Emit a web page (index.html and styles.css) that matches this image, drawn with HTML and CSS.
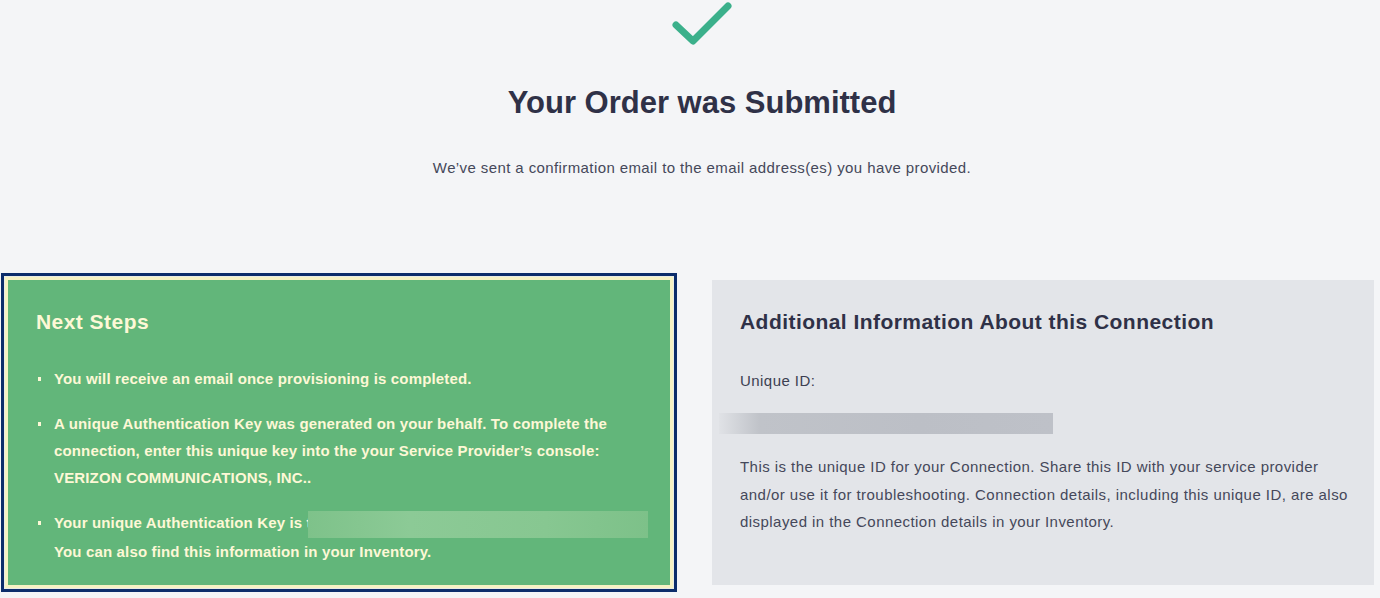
FILE: index.html
```html
<!DOCTYPE html>
<html lang="en">
<head>
<meta charset="UTF-8">
<meta name="viewport" content="width=device-width, initial-scale=1.0">
<title>Your Order was Submitted</title>
<link rel="stylesheet" href="styles.css">
</head>
<body>

<!-- order confirmation header -->
<div class="confirm-header">
  <svg class="check-icon" width="60" height="50" viewBox="0 0 60 50">
    <polyline points="4,25 21,41 56,6" fill="none" stroke="#3bb08b" stroke-width="7" stroke-linecap="round" stroke-linejoin="round"/>
  </svg>
  <h1>Your Order was Submitted</h1>
  <p class="subtitle">We’ve sent a confirmation email to the email address(es) you have provided.</p>
</div>

<div class="cards-row">
  <div class="highlight">
    <div class="card next-steps">
      <h2>Next Steps</h2>
      <ul>
        <li>You will receive an email once provisioning is completed.</li>
        <li>A unique Authentication Key was generated on your behalf. To complete the connection, enter this unique key into the your Service Provider’s console: VERIZON COMMUNICATIONS, INC..</li>
        <li><span class="key-line">Your unique Authentication Key is t<span class="key-hidden"></span></span><br>You can also find this information in your Inventory.</li>
      </ul>
    </div>
  </div>

  <div class="card info">
    <h2>Additional Information About this Connection</h2>
    <p class="label">Unique ID:</p>
    <div class="id-hidden"></div>
    <p class="desc">This is the unique ID for your Connection. Share this ID with your service provider and/or use it for troubleshooting. Connection details, including this unique ID, are also displayed in the Connection details in your Inventory.</p>
  </div>
</div>

</body>
</html>
```

FILE: styles.css
```css
body {
    font-family: "Liberation Sans", Arial, sans-serif;
    background-color: #f4f5f7;
    margin: 0;
    padding: 0;
    color: #2f3147;
}

.confirm-header {
    text-align: center;
    padding-left: 24px;
}

.check-icon {
    display: block;
    margin: 0 auto;
}

h1 {
    font-size: 31px;
    font-weight: 700;
    line-height: 34px;
    margin: 36px 0 0;
    color: #2f3147;
}

.subtitle {
    font-size: 15px;
    line-height: 20px;
    letter-spacing: 0.4px;
    margin: 38px 0 0;
    color: #45485a;
}

/* cards */
.cards-row {
    display: flex;
    align-items: flex-start;
    gap: 35px;
    margin-top: 95px;
    padding: 0 6px 0 1px;
}

.highlight {
    border: 3px solid #0c2d6b;
    padding: 1px;
    background-color: #e9ece4;
    width: 668px;
    flex: none;
}

.card {
    box-sizing: border-box;
    height: 311px;
    padding: 30px 28px 0;
}

.card h2 {
    font-size: 21px;
    font-weight: 700;
    line-height: 24px;
    letter-spacing: 0.45px;
    margin: 0;
}

.next-steps {
    background-color: #62b67a;
    border: 3px solid #f6f2c4;
    color: #fdf8d6;
}

.next-steps ul {
    margin: 31px 0 0;
    padding-left: 18px;
    list-style: none;
}

.next-steps li {
    position: relative;
    font-size: 15px;
    font-weight: 700;
    line-height: 27px;
    letter-spacing: 0.15px;
    margin-bottom: 18px;
}

.next-steps li::before {
    content: "";
    position: absolute;
    left: -16px;
    top: 12px;
    width: 3px;
    height: 4px;
    background-color: #fdf8d6;
}

.key-line {
    white-space: nowrap;
}

.key-hidden {
    display: inline-block;
    width: 340px;
    height: 27px;
    margin-left: -4px;
    vertical-align: middle;
    background: linear-gradient(90deg, #7ec28a, #8cca96 30%, #87c791 70%, #7dc189);
}

.info {
    flex: 1;
    margin-top: 7px;
    height: 305px;
    padding-right: 18px;
    background-color: #e3e5e9;
}

.info .label {
    font-size: 15px;
    line-height: 27px;
    letter-spacing: 0.45px;
    margin: 33px 0 0;
    color: #3c3f51;
}

.id-hidden {
    margin: 19px 0 0 -21px;
    width: 334px;
    height: 21px;
    background: linear-gradient(90deg, #e0e2e6, #c0c3c9 12%, #bcbfc6 60%, #bec1c8);
}

.info .desc {
    font-size: 15px;
    line-height: 27.5px;
    letter-spacing: 0.45px;
    margin: 19px 0 0;
    color: #45485a;
}
```
